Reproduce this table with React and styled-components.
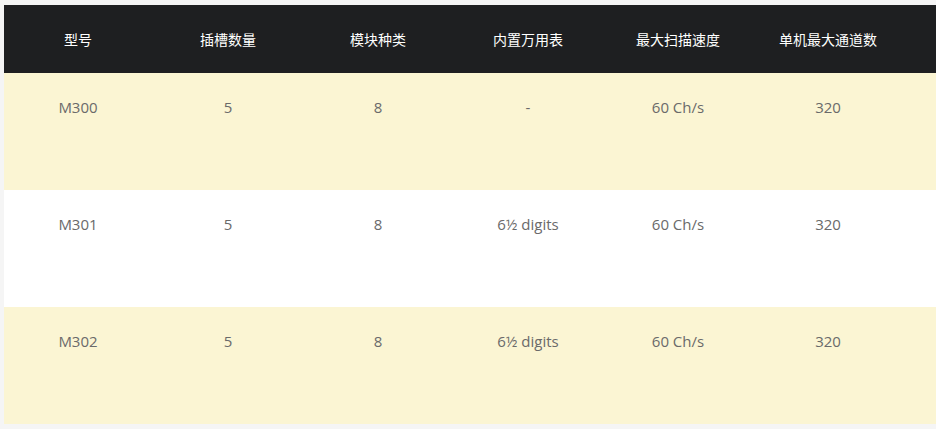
import styled, { createGlobalStyle } from "styled-components";

const Global = createGlobalStyle`
  html, body {
    margin: 0;
    background: #f5f5f5;
    overflow: hidden;
  }
`;

const Page = styled.div`
  padding: 5px 0 0 4px;
  font-family: "Open Sans", "Noto Sans CJK SC", sans-serif;
  font-size: 14px;
`;

const Table = styled.div`
  width: 932px;
  display: flex;
  flex-direction: column;
`;

const Row = styled.div`
  display: grid;
  grid-template-columns: repeat(6, 150px) 1fr;
  height: ${props => (props.head ? "68px" : "117px")};
  align-items: ${props => (props.head ? "center" : "start")};
  background: ${props => (props.head ? "#1e1f21" : props.tint ? "#fbf5d3" : "#ffffff")};
`;

const HeadCell = styled.div`
  color: #ffffff;
  text-align: center;
  line-height: 20px;
  font-family: "Noto Sans CJK SC", sans-serif;
  margin-left: -2px;
`;

const Cell = styled.div`
  color: #6a6a6a;
  font-size: 15px;
  text-align: center;
  line-height: 20px;
  padding-top: 24px;
  margin-left: -2px;
`;

const headers = ["型号", "插槽数量", "模块种类", "内置万用表", "最大扫描速度", "单机最大通道数"];

const rows = [
  ["M300", "5", "8", "-", "60 Ch/s", "320"],
  ["M301", "5", "8", "6½ digits", "60 Ch/s", "320"],
  ["M302", "5", "8", "6½ digits", "60 Ch/s", "320"],
];

export default function App() {
  return (
    <Page>
      <Global />
      <Table>
        <Row head>
          {headers.map(h => (
            <HeadCell key={h}>{h}</HeadCell>
          ))}
        </Row>
        {rows.map((r, i) => (
          <Row key={r[0]} tint={i % 2 === 0}>
            {r.map((c, j) => (
              <Cell key={j}>{c}</Cell>
            ))}
          </Row>
        ))}
      </Table>
    </Page>
  );
}
